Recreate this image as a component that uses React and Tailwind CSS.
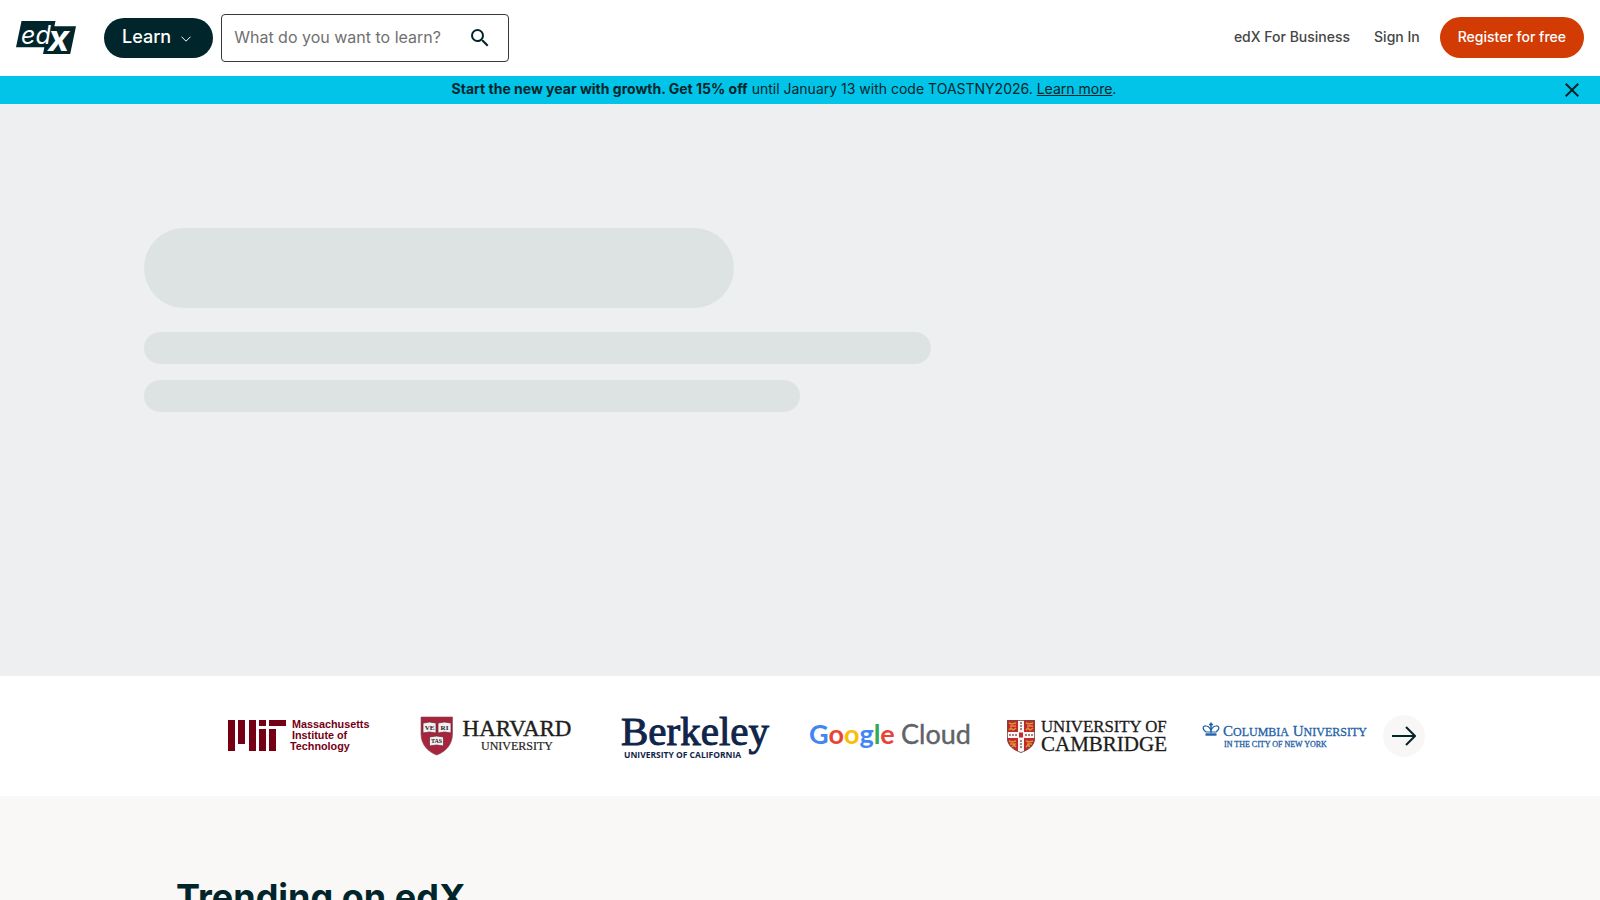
import React from "react";

function EdxLogo() {
  return (
    <svg viewBox="0 0 60 34" className="h-[34px] w-[60px] overflow-visible" role="img" aria-label="edX">
      <path d="M5.5 0H39.5L38.4 5.2H60L54.2 33H27L28.4 26.2H0Z" fill="#00262b" />
      <text x="5" y="23" fontFamily="Inter, sans-serif" fontStyle="italic" fontSize="25" fill="#fff">ed</text>
      <text x="32" y="30" fontFamily="Inter, sans-serif" fontStyle="italic" fontWeight="700" fontSize="37" fill="#fff">x</text>
    </svg>
  );
}

function MitLogo() {
  return (
    <svg viewBox="0 0 160 60" className="h-[60px] w-40 overflow-visible" role="img" aria-label="Massachusetts Institute of Technology">
      <g fill="#750014">
        <path d="M9 14h7v31H9zM19 14h7v24h-7zM30 14h7v31h-7zM40 14h7v6h-7zM40 23h7v22h-7zM50 14h17v6H50zM50 23h7v22h-7z" />
        <g fontFamily="'Liberation Sans', Arial, sans-serif" fontWeight="700" fontSize="10.8">
          <text x="73" y="22">Massachusetts</text>
          <text x="73" y="33">Institute of</text>
          <text x="71" y="44">Technology</text>
        </g>
      </g>
    </svg>
  );
}

function HarvardLogo() {
  return (
    <svg viewBox="0 0 160 60" className="h-[60px] w-40 overflow-visible" role="img" aria-label="Harvard University">
      <path d="M5 11H36.500V28C36.500 39 29 46 20.750 49C12.500 46 5 39 5 28Z" fill="#a8233c" stroke="#7d4a55" strokeWidth="0.6" />
      <g fill="#f6eeee" stroke="#5a2a35" strokeWidth="0.7">
        <path d="M7 17l6.500-1 6.500 1v10l-6.500-1-6.500 1zM22 17l6.500-1 6.500 1v10l-6.500-1-6.500 1zM13.500 31l7-1 7 1v9l-7-1-7 1z" />
      </g>
      <g fontFamily="'Liberation Serif', serif" fontWeight="700" fontSize="7" fill="#222" textAnchor="middle">
        <text x="13.5" y="24">VE</text>
        <text x="28.5" y="24">RI</text>
        <text x="20.5" y="37" fontSize="6">TAS</text>
      </g>
      <g fontFamily="'Liberation Serif', serif" fill="#1e1e1e" stroke="#1e1e1e" textAnchor="middle">
        <text x="101" y="30" fontSize="23" strokeWidth="0.4">HARVARD</text>
        <text x="101" y="44" fontSize="12" strokeWidth="0.2">UNIVERSITY</text>
      </g>
    </svg>
  );
}

function BerkeleyLogo() {
  return (
    <svg viewBox="0 0 160 60" className="h-[60px] w-40 overflow-visible" role="img" aria-label="Berkeley, University of California">
      <g fill="#0f2549">
        <text x="8" y="39" fontFamily="'Liberation Serif', serif" fontSize="41" stroke="#0f2549" strokeWidth="1">Berkeley</text>
        <text x="11" y="52" fontFamily="'Open Sans', sans-serif" fontWeight="700" fontSize="8.5">UNIVERSITY OF CALIFORNIA</text>
      </g>
    </svg>
  );
}

function GoogleCloudLogo() {
  return (
    <svg viewBox="0 0 160 60" className="h-[60px] w-40 overflow-visible" role="img" aria-label="Google Cloud">
      <g fontFamily="Lato, sans-serif">
        <text x="-1" y="38" fontSize="27" fontWeight="700">
          <tspan fill="#4285f4">G</tspan>
          <tspan fill="#ea4335">o</tspan>
          <tspan fill="#fbbc04">o</tspan>
          <tspan fill="#4285f4">g</tspan>
          <tspan fill="#34a853">l</tspan>
          <tspan fill="#ea4335">e</tspan>
        </text>
        <text x="91" y="38" fontSize="27" fill="#5f6368" stroke="#5f6368" strokeWidth="0.4">Cloud</text>
      </g>
    </svg>
  );
}

function CambridgeLogo() {
  return (
    <svg viewBox="0 0 160 60" className="h-[60px] w-40 overflow-visible" role="img" aria-label="University of Cambridge">
      <clipPath id="cambridge-shield">
        <path d="M0 14H28V32C28 40 21 44 14 47C7 44 0 40 0 32Z" />
      </clipPath>
      <g clipPath="url(#cambridge-shield)">
        <path d="M0 14h28v33H0z" fill="#c2282e" />
        <path d="M11 14h6v33h-6zM0 26h28v6H0z" fill="#fbf4f2" />
        <path d="M12 26.500h4v5h-4z" fill="#c2282e" />
        <path
          d="M2 17l3 1 4-1M3 20h6M2 24l2-2 2 2 3-2M19 17l3 1 4-1M20 20h6M19 24l2-2 2 2 3-2M2 35l3 1 4-1M3 38h6M5 41l2-2 2 2M19 35l3 1 4-1M20 38h5M19 41l2-2 2 2"
          fill="none"
          stroke="#d99532"
          strokeWidth="1.500"
        />
        <path d="M14 16v8M14 34v9M2 29h8M18 29h8" stroke="#a08585" strokeWidth="2" strokeDasharray="2 1" />
      </g>
      <path d="M0.500 14.500H27.500V32C27.500 40 21 44 14 46.500C7 44 0.500 40 0.500 32Z" fill="none" stroke="#6b4a45" strokeWidth="0.8" />
      <g fontFamily="'Liberation Serif', serif" fill="#1c1c1c" stroke="#1c1c1c" strokeWidth="0.3">
        <text x="34" y="26" fontSize="16.8">UNIVERSITY OF</text>
        <text x="34" y="45" fontSize="21">CAMBRIDGE</text>
      </g>
    </svg>
  );
}

function ColumbiaLogo() {
  return (
    <svg viewBox="0 0 162 60" className="h-[60px] w-[162px] overflow-visible" role="img" aria-label="Columbia University in the City of New York">
      <g fill="none" stroke="#1f5fa8">
        <path d="M2.500 28.500h11" strokeWidth="2.400" />
        <path d="M3 26C-1.500 23 0 19.500 3 20c3 0 5 3 5 6M13 26C17.500 23 16 19.500 13 20c-3 0-5 3-5 6M8 27v-6M3 26h10" strokeWidth="1.200" />
        <path d="M8 16.500v4.500M6 18.500h4" strokeWidth="1.600" />
      </g>
      <g fontFamily="'Liberation Serif', serif" fill="#1f5fa8" stroke="#1f5fa8" strokeWidth="0.3">
        <text x="20" y="30" fontSize="15">C<tspan fontSize="12">OLUMBIA</tspan> U<tspan fontSize="12">NIVERSITY</tspan></text>
        <text x="21" y="41" fontSize="8">IN THE CITY OF NEW YORK</text>
      </g>
    </svg>
  );
}

const partners = [MitLogo, HarvardLogo, BerkeleyLogo, GoogleCloudLogo, CambridgeLogo, ColumbiaLogo];

export default function App() {
  return (
    <div className="h-screen overflow-hidden bg-[#f9f8f6] font-[Inter,sans-serif] text-[#00262b]">
      <header className="flex h-[76px] items-center bg-white px-4">
        <a href="#home" className="mr-7 block">
          <EdxLogo />
        </a>
        <button type="button" className="mr-2 flex h-10 items-center gap-2.5 rounded-full bg-[#00262b] pr-[22px] pb-0.5 pl-[18px] text-lg font-medium text-white">
          Learn
          <svg viewBox="0 0 10 6" className="mt-1 h-1.5 w-2.5" fill="none" stroke="currentColor" aria-hidden="true">
            <path d="M0.500 0.700L5 5.200L9.500 0.700" />
          </svg>
        </button>
        <form className="flex h-12 w-72 items-center rounded border border-[#333b40] pr-4 pl-3" onSubmit={(e) => e.preventDefault()}>
          <input
            type="text"
            aria-label="What do you want to learn?"
            placeholder="What do you want to learn?"
            className="min-w-0 flex-1 bg-transparent pb-0.5 text-base outline-none placeholder:text-[#707070]"
          />
          <button type="submit" aria-label="Search">
            <svg viewBox="0 0 24 24" className="size-6" fill="currentColor" aria-hidden="true">
              <path d="M15.500 14h-.79l-.28-.27A6.471 6.471 0 0 0 16 9.500 6.500 6.500 0 1 0 9.500 16c1.610 0 3.090-.59 4.230-1.570l.27.28v.79l5 4.990L20.490 19l-4.990-5zm-6 0C7.010 14 5 11.990 5 9.500S7.010 5 9.500 5 14 7.010 14 9.500 11.990 14 9.500 14z" />
            </svg>
          </button>
        </form>
        <nav className="ml-auto flex items-center pb-0.5 text-sm font-medium text-[#454545]">
          <a href="#business" className="mr-6">edX For Business</a>
          <a href="#signin" className="mr-5">Sign In</a>
          <a href="#register" className="flex h-[41px] items-center rounded-full bg-[#d23b04] px-[18px] text-white">Register for free</a>
        </nav>
      </header>

      <div className="flex h-7 items-center bg-[#02c4e8] pr-4 pl-2 text-sm">
        <p className="flex-1 pb-0.5 text-center">
          <strong className="font-bold">Start the new year with growth. Get 15% off</strong> until January 13 with code TOASTNY2026.{" "}
          <a href="#offer" className="underline">Learn more</a>.
        </p>
        <button type="button" aria-label="Dismiss">
          <svg viewBox="0 0 24 24" className="size-6" fill="currentColor" aria-hidden="true">
            <path d="M19 6.410L17.590 5 12 10.590 6.410 5 5 6.410 10.590 12 5 17.590 6.410 19 12 13.410 17.590 19 19 17.590 13.410 12z" />
          </svg>
        </button>
      </div>

      <main>
        <section className="h-[572px] bg-[#eeeff1] px-[9%] pt-[124px]" aria-busy="true">
          <div className="h-20 w-[45%] rounded-full bg-[#dde3e3]" />
          <div className="mt-6 h-8 w-[60%] rounded-full bg-[#dde3e3]" />
          <div className="mt-4 h-8 w-1/2 rounded-full bg-[#dde3e3]" />
        </section>

        <section className="flex h-[120px] items-center bg-white pr-[175px] pl-[200px]">
          <ul className="grid flex-1 grid-cols-6">
            {partners.map((Logo, i) => (
              <li key={i} className="flex justify-center">
                <Logo />
              </li>
            ))}
          </ul>
          <button type="button" aria-label="Next partners" className="flex size-[42px] items-center justify-center rounded-full bg-[#f9f7f5]">
            <svg viewBox="0 0 24 20" className="h-5 w-6" fill="none" stroke="currentColor" strokeWidth="2" aria-hidden="true">
              <path d="M0 10H22.500M14 1L23 10L14 19" />
            </svg>
          </button>
        </section>

        <section className="px-44 pt-[81px]">
          <h2 className="text-4xl font-bold">Trending on edX</h2>
        </section>
      </main>
    </div>
  );
}
